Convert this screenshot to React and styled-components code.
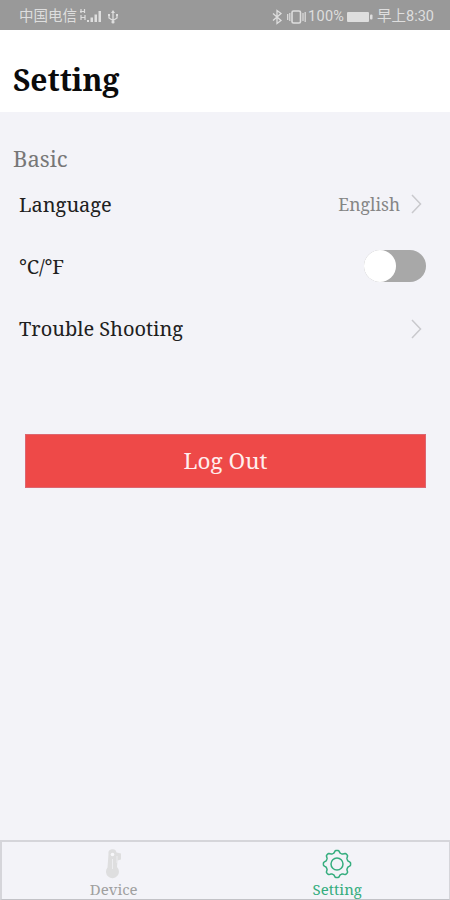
import React, { useState } from "react";
import styled, { createGlobalStyle } from "styled-components";

const GlobalStyle = createGlobalStyle`
  * {
    box-sizing: border-box;
  }

  body {
    margin: 0;
    background-color: #f3f3f8;
    font-family: "Noto Serif", "DejaVu Serif Condensed", "DejaVu Serif", serif;
  }
`;

const StyledScreen = styled.div`
  display: flex;
  flex-direction: column;
  width: 450px;
  height: 900px;
  overflow: hidden;
  background-color: #f3f3f8;
`;

const StyledStatusBar = styled.div`
  display: flex;
  justify-content: space-between;
  align-items: center;
  height: 30px;
  padding: 3px 14px 0 19px;
  background-color: #999999;
  color: #dedede;
  font-family: Roboto, "Noto Sans CJK SC", sans-serif;
  font-size: 14.5px;
  line-height: 20px;
  white-space: nowrap;
`;

const StyledStatusGroup = styled.div`
  display: flex;
  align-items: center;
`;

const StyledStatusText = styled.span`
  width: ${(props) => props.$width}px;
  letter-spacing: ${(props) => props.$spacing || 0}px;
`;

const StyledStatusIcon = styled.svg`
  display: block;
  margin-right: ${(props) => props.$gap || 0}px;
`;

const StyledHeader = styled.header`
  height: 82px;
  padding: 30px 13px 0;
  background-color: white;
`;

const StyledTitle = styled.h1`
  margin: 0;
  color: #0b0b0b;
  font-size: 30px;
  font-weight: bold;
  line-height: 39px;
`;

const StyledMain = styled.main`
  flex: 1;
  padding-top: 31px;
`;

const StyledSection = styled.h2`
  margin: 0 0 0 13px;
  color: #777777;
  font-size: 22px;
  font-weight: normal;
  line-height: 30px;
`;

const StyledRow = styled.div`
  display: flex;
  align-items: center;
  justify-content: space-between;
  height: 62.3px;
  padding: 0 24px 0 19px;
`;

const StyledLabel = styled.span`
  color: #202020;
  font-size: 20px;
  letter-spacing: ${(props) => props.$spacing || 0}px;
`;

const StyledValue = styled.span`
  display: flex;
  align-items: center;
  gap: 10px;
  color: #858585;
  font-size: 17.5px;
`;

const StyledToggle = styled.button`
  display: flex;
  justify-content: ${(props) => (props.$on ? "flex-end" : "flex-start")};
  width: 62px;
  height: 32px;
  padding: 0;
  border: none;
  border-radius: 16px;
  background-color: ${(props) => (props.$on ? "#2fae7b" : "#a8a8a8")};
`;

const StyledKnob = styled.span`
  width: 32px;
  height: 32px;
  border-radius: 50%;
  background-color: white;
`;

const StyledLogOut = styled.button`
  display: block;
  width: 401px;
  height: 54px;
  margin: 74px 0 0 25px;
  padding: 0;
  border: 1px solid #dc6670;
  background-color: #ee4948;
  color: #ffeeee;
  font-family: inherit;
  font-size: 22.5px;
`;

const StyledTabBar = styled.nav`
  display: flex;
  height: 60px;
  border: 2px solid #d5d5da;
  border-right-width: 1px;
  border-bottom: 1px solid #c2c2c7;
`;

const StyledTab = styled.a`
  display: flex;
  flex: 1;
  flex-direction: column;
  align-items: center;
  padding-top: 6px;
  color: ${(props) => (props.$active ? "#35ad7e" : "#a0a0a0")};
  font-size: 15px;
  line-height: 18px;
`;

const StyledTabIcon = styled.svg`
  display: block;
  width: 32px;
  height: 32px;
  flex-shrink: 0;
`;

function Arrow() {
  return (
    <svg width="16" height="22" viewBox="0 0 16 22" fill="none" stroke="#c9c9cd" strokeWidth="1.5">
      <path d="M2 2 L10.5 11 L2 20" />
    </svg>
  );
}

function SignalIcon() {
  return (
    <StyledStatusIcon $gap={5} width="23" height="18" viewBox="0 0 23 18" fill="currentColor">
      <path d="M2 1v4M1 3.5h4M5.5 1v4M2 7v5M2 9.5h4M6 7v5" stroke="currentColor" strokeWidth="1.2" />
      <path d="M8 12h2v2H8zM11.5 9.5h2.5V14h-2.5zM15.5 6.5H18V14h-2.5zM19.5 3H22v11h-2.5z" />
    </StyledStatusIcon>
  );
}

function UsbIcon() {
  return (
    <StyledStatusIcon width="12" height="16" viewBox="0 0 12 16" fill="none" stroke="currentColor" strokeWidth="1.3">
      <path d="M6 13V3M2 6v3l4 2.5L10 9V6" />
      <path d="M6 1l2 3H4zM1 5h2v2H1zM9 5h2v2H9z" fill="currentColor" stroke="none" />
      <circle cx="6" cy="13" r="1.6" fill="currentColor" stroke="none" />
    </StyledStatusIcon>
  );
}

function BluetoothIcon() {
  return (
    <StyledStatusIcon $gap={4} width="11" height="16" viewBox="0 0 11 16" fill="none" stroke="currentColor" strokeWidth="1.3">
      <path d="M1 4.5l8 7L5 14.5v-13L9 4.5l-8 7" />
    </StyledStatusIcon>
  );
}

function VibrateIcon() {
  return (
    <StyledStatusIcon $gap={2} width="19" height="16" viewBox="0 0 19 16" fill="none" stroke="currentColor" strokeWidth="1.6">
      <rect x="5" y="2" width="8.5" height="12" rx="1.5" />
      <path d="M2.8 4v8M.7 5v6M16 4v8M18.2 3v10" strokeWidth="1.2" />
    </StyledStatusIcon>
  );
}

function BatteryIcon() {
  return (
    <StyledStatusIcon $gap={4} width="26" height="12" viewBox="0 0 26 12" fill="currentColor">
      <rect x="0" y="1" width="22" height="10" rx="1" />
      <rect x="23" y="3.5" width="2.5" height="5" rx="1" />
    </StyledStatusIcon>
  );
}

function ThermometerIcon() {
  return (
    <StyledTabIcon viewBox="0 0 32 32">
      <path
        d="M10.5 6a4 4 0 0 1 8-1.5l4.5 1v6l-3.500 1-.5 6.500a6.500 6.500 0 1 1-9.500.5z"
        fill="#dededf"
      />
      <circle cx="14.500" cy="6.500" r="1.8" fill="#f7f7fa" />
      <path d="M14.500 11v10M19 8v7" stroke="#ededf0" strokeWidth="1" />
    </StyledTabIcon>
  );
}

// outline with eight rounded teeth around the centre of a 32px box
const gearPath = (() => {
  const points = [];
  for (let i = 0; i < 96; i++) {
    const angle = (i / 96) * Math.PI * 2 - Math.PI / 2;
    const wave = Math.cos(8 * (angle + Math.PI / 2));
    const radius = 12.4 + 1.25 * Math.tanh(2 * wave);
    points.push(`${(16 + radius * Math.cos(angle)).toFixed(2)} ${(16 + radius * Math.sin(angle)).toFixed(2)}`);
  }
  return `M${points.join("L")}Z`;
})();

function GearIcon() {
  return (
    <StyledTabIcon viewBox="0 0 32 32" fill="none" stroke="currentColor" strokeWidth="1.5" strokeLinejoin="round">
      <path d={gearPath} />
      <circle cx="16" cy="16" r="6" />
    </StyledTabIcon>
  );
}

function App() {
  const [fahrenheit, setFahrenheit] = useState(false);

  return (
    <StyledScreen>
      <GlobalStyle />
      <StyledStatusBar>
        <StyledStatusGroup>
          <StyledStatusText $width={60}>中国电信</StyledStatusText>
          <SignalIcon />
          <UsbIcon />
        </StyledStatusGroup>
        <StyledStatusGroup>
          <BluetoothIcon />
          <VibrateIcon />
          <StyledStatusText $width={39} $spacing={0.3}>100%</StyledStatusText>
          <BatteryIcon />
          <StyledStatusText $width={59}>早上8:30</StyledStatusText>
        </StyledStatusGroup>
      </StyledStatusBar>

      <StyledHeader>
        <StyledTitle>Setting</StyledTitle>
      </StyledHeader>

      <StyledMain>
        <StyledSection>Basic</StyledSection>
        <StyledRow>
          <StyledLabel>Language</StyledLabel>
          <StyledValue>
            English
            <Arrow />
          </StyledValue>
        </StyledRow>
        <StyledRow>
          <StyledLabel $spacing={-0.2}>°C/°F</StyledLabel>
          <StyledToggle $on={fahrenheit} onClick={() => setFahrenheit(!fahrenheit)}>
            <StyledKnob />
          </StyledToggle>
        </StyledRow>
        <StyledRow>
          <StyledLabel>Trouble Shooting</StyledLabel>
          <Arrow />
        </StyledRow>
        <StyledLogOut>Log Out</StyledLogOut>
      </StyledMain>

      <StyledTabBar>
        <StyledTab>
          <ThermometerIcon />
          Device
        </StyledTab>
        <StyledTab $active>
          <GearIcon />
          Setting
        </StyledTab>
      </StyledTabBar>
    </StyledScreen>
  );
}

export default App;
